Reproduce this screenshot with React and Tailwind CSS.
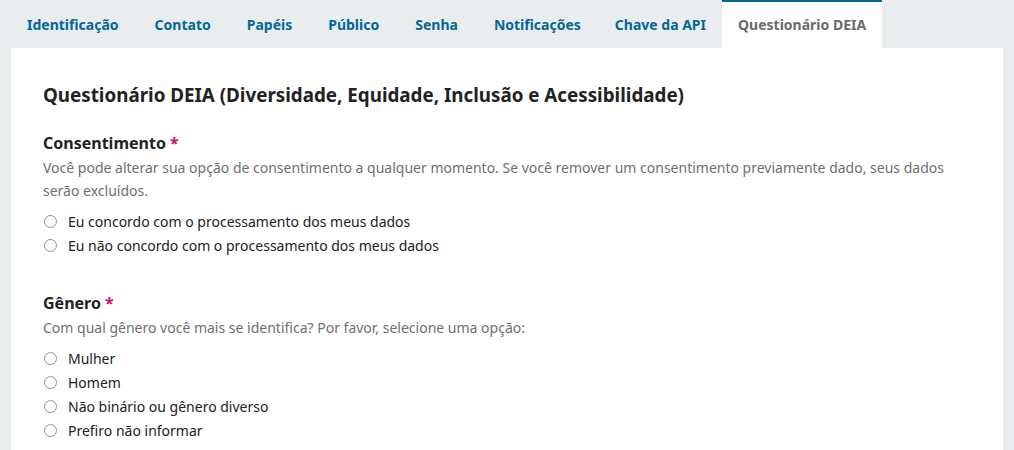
import React, { useState } from 'react';

const tabs = [
    'Identificação',
    'Contato',
    'Papéis',
    'Público',
    'Senha',
    'Notificações',
    'Chave da API',
    'Questionário DEIA',
];

const Radio = ({ name, label, checked, onChange }) => (
    <label className="flex items-center gap-[11px] h-6 text-[14px] text-[#222] cursor-pointer">
        <span className="w-[13px] h-[13px] rounded-full border border-[#8f8f9d] bg-white flex items-center justify-center ml-px">
            {checked && <span className="w-[7px] h-[7px] rounded-full bg-[#006798]" />}
        </span>
        <input type="radio" name={name} className="hidden" checked={checked} onChange={onChange} />
        <span>{label}</span>
    </label>
);

const Question = ({ title, description, name, options, value, setValue, extra }) => (
    <fieldset className={extra}>
        <legend className="text-[16px] font-bold text-[#222] leading-6">
            {title} <span className="text-[#d00a6c]">*</span>
        </legend>
        <p className="text-[14px] leading-[23px] text-[#6f6f6f] mt-px">{description}</p>
        <div className="mt-[7px] flex flex-col">
            {options.map((o) => (
                <Radio key={o} name={name} label={o} checked={value === o} onChange={() => setValue(o)} />
            ))}
        </div>
    </fieldset>
);

export default function App() {
    const [active] = useState('Questionário DEIA');
    const [consent, setConsent] = useState(null);
    const [gender, setGender] = useState(null);

    return (
        <div className="min-h-screen bg-[#eaedee] px-[11px] font-['Noto_Sans',sans-serif]">
            {/* barra de abas */}
            <div className="flex h-12">
                {tabs.map((t, i) =>
                    t === active ? (
                        <div
                            key={t}
                            className="px-4 flex items-center bg-white border-t-2 border-[#006798] text-[14px] font-bold text-[#6b6b6b] pb-[2px]"
                        >
                            {t}
                        </div>
                    ) : (
                        <div
                            key={t}
                            className={
                                i === 5
                                    ? 'px-4 mr-[2px] flex items-center text-[14px] font-bold text-[#006798]'
                                    : i === 6
                                    ? 'px-4 flex items-center text-[14px] font-bold text-[#006798]'
                                    : 'px-4 mr-[4px] flex items-center text-[14px] font-bold text-[#006798]'
                            }
                        >
                            {t}
                        </div>
                    )
                )}
            </div>

            {/* painel */}
            <div className="bg-white px-8 pt-[33px] pb-10">
                <h2 className="text-[18.8px] font-bold text-[#222] leading-7">
                    Questionário DEIA (Diversidade, Equidade, Inclusão e Acessibilidade)
                </h2>

                <Question
                    extra="mt-[22px]"
                    title="Consentimento"
                    description="Você pode alterar sua opção de consentimento a qualquer momento. Se você remover um consentimento previamente dado, seus dados serão excluídos."
                    name="consent"
                    options={[
                        'Eu concordo com o processamento dos meus dados',
                        'Eu não concordo com o processamento dos meus dados',
                    ]}
                    value={consent}
                    setValue={setConsent}
                />

                <Question
                    extra="mt-[34px]"
                    title="Gênero"
                    description="Com qual gênero você mais se identifica? Por favor, selecione uma opção:"
                    name="gender"
                    options={['Mulher', 'Homem', 'Não binário ou gênero diverso', 'Prefiro não informar']}
                    value={gender}
                    setValue={setGender}
                />
            </div>
        </div>
    );
}
